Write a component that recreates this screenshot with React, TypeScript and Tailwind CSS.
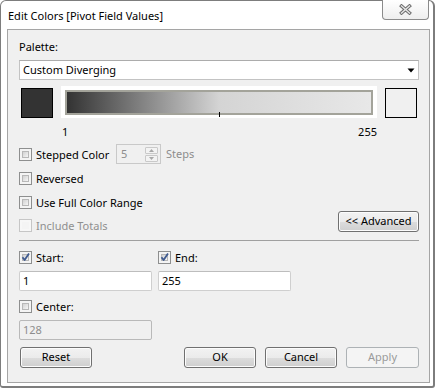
import React from "react";

const font = { fontFamily: '"Noto Sans", "Open Sans", sans-serif' };

function Checkbox({ checked, disabled }: { checked?: boolean; disabled?: boolean }) {
  if (disabled) {
    return (
      <div className="w-[13px] h-[13px] shrink-0 border border-[#c6c6c6] bg-[#f7f7f7] p-[2px]">
        <div className="w-full h-full bg-[#f4f4f4]" />
      </div>
    );
  }
  return (
    <div className="relative w-[13px] h-[13px] shrink-0 border border-[#8e8f8f] bg-[#f4f4f4] p-[2px]">
      <div className="w-full h-full border border-[#b8b8b8] bg-gradient-to-br from-[#d2d2d2] to-[#f6f6f6]" />
      {checked && (
        <svg className="absolute left-0 top-0" width="11" height="11" viewBox="0 0 11 11">
          <path d="M2.5 5.2 L4.6 8 L9 1.5" fill="none" stroke="#3f5a8f" strokeWidth="1.8" strokeLinejoin="round" />
        </svg>
      )}
    </div>
  );
}

function CheckRow({ label, checked, disabled }: { label: string; checked?: boolean; disabled?: boolean }) {
  return (
    <div className="flex items-center h-[13px] gap-[4px]">
      <Checkbox checked={checked} disabled={disabled} />
      <span className={`text-[11px] leading-[13px] whitespace-nowrap ${disabled ? "text-[#8f8f8f]" : "text-black"}`}>{label}</span>
    </div>
  );
}

function Button({ label, disabled, className }: { label: string; disabled?: boolean; className?: string }) {
  if (disabled) {
    return (
      <div className={`h-[21px] flex items-center justify-center rounded-[3px] border border-[#adb2b5] bg-[#f4f4f4] text-[11px] text-[#9a9a9a] ${className ?? ""}`}>
        {label}
      </div>
    );
  }
  return (
    <div
      className={`h-[21px] flex items-center justify-center rounded-[3px] border border-[#707070] bg-[linear-gradient(#f2f2f2_0%,#ebebeb_50%,#dddddd_50%,#cfcfcf_100%)] shadow-[inset_0_0_0_1px_#fcfcfc] text-[11px] text-black ${className ?? ""}`}
    >
      {label}
    </div>
  );
}

function TextInput({ value, disabled, className }: { value: string; disabled?: boolean; className?: string }) {
  return (
    <div
      className={`h-[20px] flex items-center pl-[3px] rounded-[2px] border text-[11px] ${
        disabled ? "border-[#b9b9b9] bg-[#f0f0f0] text-[#8d8d8d]" : "border-[#cfcfcf] border-t-[#bdbdbd] bg-white text-black"
      } ${className ?? ""}`}
    >
      {value}
    </div>
  );
}

export default function App() {
  return (
    <div className="w-[438px] h-[388px] bg-white" style={font}>
      <div className="w-[435px] h-[388px] flex flex-col bg-white border-t border-l border-r-2 border-b-2 border-[#7d7d7d] rounded-t-[6px] rounded-b-[3px] pl-[6px] pr-[3px] pb-[3px]">
        {/* title bar */}
        <div className="h-[28px] shrink-0 flex items-start justify-between">
          <div className="pl-[1px] pt-[8px] text-[11px] leading-[14px] text-black whitespace-nowrap">
            Edit Colors [Pivot Field Values]
          </div>
          <div className="-mt-px mr-px w-[47px] h-[20px] border border-t-0 border-[#8b8b8b] rounded-b-[4px] bg-gradient-to-b from-white to-[#eeeeee] flex items-center justify-center">
            <svg width="13" height="11" viewBox="0 0 13 11">
              <path d="M2.5 2 L10.5 9 M10.5 2 L2.5 9" stroke="#6e6e6e" strokeWidth="3.4" strokeLinecap="square" />
              <path d="M2.5 2 L10.5 9 M10.5 2 L2.5 9" stroke="#e6e6e6" strokeWidth="1.4" strokeLinecap="square" />
            </svg>
          </div>
        </div>

        {/* client */}
        <div className="flex-1 flex flex-col border border-[#a5a5a5] bg-[#f0f0f0] pl-[11px] pr-[10px] pt-[10px]">
          <div className="text-[11px] leading-[14px] text-black">Palette:</div>

          {/* dropdown */}
          <div className="mt-[6px] h-[20px] flex items-center justify-between border border-[#c3c3c3] border-t-[#acacac] bg-white pl-[3px] pr-[3px] text-[11px] text-black">
            <span>Custom Diverging</span>
            <svg width="8" height="5" viewBox="0 0 8 5">
              <path d="M0.5 0.5 L7.5 0.5 L4 4.5 Z" fill="#000" />
            </svg>
          </div>

          {/* swatches and gradient */}
          <div className="mt-[6px] h-[32px] flex items-start pl-[2px]">
            <div className="mt-[2px] w-[32px] h-[30px] border border-black bg-[#333333]" />
            <div className="ml-[8px] w-[316px] h-[32px] bg-white pl-[4px] pr-[4px] pt-[4px]">
              <div className="relative h-[25px] border-2 border-[#a3a39a] bg-[linear-gradient(to_right,#333333_0%,#d4d4d4_50%,#e8e8e8_100%)]">
                <div className="absolute left-1/2 top-[20px] w-px h-[5px] bg-black" />
              </div>
            </div>
            <div className="ml-[8px] mt-[2px] w-[32px] h-[30px] border border-black bg-[#f0f0f0]" />
          </div>

          {/* range labels */}
          <div className="mt-[7px] ml-[42px] w-[316px] flex justify-between text-[11px] leading-[14px] text-black">
            <span className="pl-[1px]">1</span>
            <span>255</span>
          </div>

          {/* stepped color */}
          <div className="mt-[5px] h-[20px] flex items-center">
            <div className="w-[97px]">
              <CheckRow label="Stepped Color" />
            </div>
            <div className="w-[45px] h-[20px] flex items-center justify-between border border-[#c9c9c9] bg-[#f0f0f0] pl-[4px] pr-[2px] text-[11px] text-[#8d8d8d]">
              <span>5</span>
              <div className="flex flex-col gap-[1px]">
                <div className="w-[13px] h-[7px] border border-[#c9c9c9] rounded-[1px] bg-[#f3f3f3] flex items-center justify-center">
                  <svg width="5" height="3" viewBox="0 0 5 3"><path d="M0 3 L2.5 0 L5 3 Z" fill="#a8a8a8" /></svg>
                </div>
                <div className="w-[13px] h-[7px] border border-[#c9c9c9] rounded-[1px] bg-[#f3f3f3] flex items-center justify-center">
                  <svg width="5" height="3" viewBox="0 0 5 3"><path d="M0 0 L5 0 L2.5 3 Z" fill="#a8a8a8" /></svg>
                </div>
              </div>
            </div>
            <span className="ml-[5px] text-[11px] text-[#8d8d8d]">Steps</span>
          </div>

          <div className="mt-[8px]">
            <CheckRow label="Reversed" />
          </div>
          <div className="mt-[11px]">
            <CheckRow label="Use Full Color Range" />
          </div>

          <div className="mt-[2px] flex items-end justify-between">
            <CheckRow label="Include Totals" disabled />
            <Button label="<< Advanced" className="w-[81px]" />
          </div>

          <div className="mt-[8px] h-px bg-[#a0a0a0]" />

          {/* start / end */}
          <div className="mt-[10px] flex gap-[6px]">
            <div className="w-[133px]">
              <CheckRow label="Start:" checked />
            </div>
            <CheckRow label="End:" checked />
          </div>
          <div className="mt-[7px] flex gap-[6px]">
            <TextInput value="1" className="w-[133px]" />
            <TextInput value="255" className="w-[133px]" />
          </div>

          <div className="mt-[9px]">
            <CheckRow label="Center:" />
          </div>
          <div className="mt-[7px]">
            <TextInput value="128" disabled className="w-[133px]" />
          </div>

          {/* buttons */}
          <div className="mt-[7px] flex items-center">
            <Button label="Reset" className="ml-[1px] w-[72px]" />
            <div className="flex-1" />
            <div className="flex gap-[9px]">
              <Button label="OK" className="w-[72px]" />
              <Button label="Cancel" className="w-[72px]" />
              <Button label="Apply" disabled className="w-[73px]" />
            </div>
          </div>
        </div>
      </div>
    </div>
  );
}
